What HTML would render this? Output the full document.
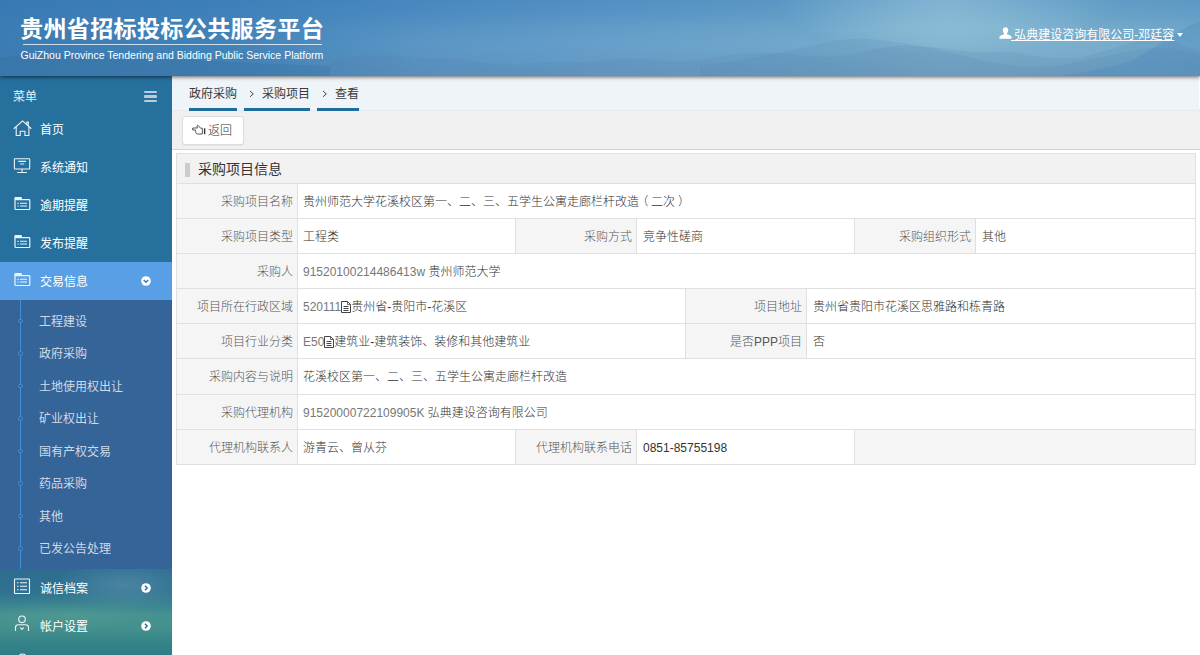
<!DOCTYPE html>
<html lang="zh-CN">
<head>
<meta charset="utf-8">
<title>贵州省招标投标公共服务平台</title>
<style>
*{box-sizing:border-box;margin:0;padding:0}
html,body{width:1200px;height:655px;overflow:hidden;background:#fff}
body{font-family:"Liberation Sans","Noto Sans CJK SC",sans-serif;font-size:12px;color:#333;position:relative;font-weight:300}
a{color:inherit;text-decoration:none}
/* header */
#hd{position:absolute;left:0;top:0;width:1200px;height:76px;z-index:5;overflow:visible;background:#4a8bbf;box-shadow:0 1px 4px rgba(0,0,0,.6)}
#hd .bg{position:absolute;left:0;top:0;width:1200px;height:76px;display:block}
#hd h1{position:absolute;left:20px;top:14px;font-size:23.100px;line-height:30px;font-weight:bold;color:#fff;letter-spacing:.3px;white-space:nowrap}
#hd .ln{position:absolute;left:23px;top:44px;width:299px;height:1px;background:rgba(255,255,255,.75)}
#hd .en{position:absolute;left:20.500px;top:47.700px;font-size:10.500px;line-height:14px;color:#fff;white-space:nowrap}
#hd .user{position:absolute;left:998px;top:26px;height:18px;line-height:18px;color:#fff;white-space:nowrap;font-size:12px;font-weight:400}
#hd .user svg{position:absolute;left:.6px;top:1.300px}
#hd .user .t{position:absolute;left:13px;top:0;text-decoration:underline;white-space:pre}
#hd .user .c{position:absolute;left:178.500px;top:7px;width:0;height:0;border:3.300px solid transparent;border-top:4px solid #fff;border-bottom:0}
/* sidebar */
#sb{position:absolute;left:0;top:76px;width:172px;height:579px;background:#26709e;color:#fff;overflow:hidden}
#sb .photo{position:absolute;left:0;top:493px;width:172px;height:86px;
 background:
  radial-gradient(ellipse 70px 26px at 125px 16px,rgba(120,165,190,.38),rgba(120,165,190,0) 100%),
  radial-gradient(ellipse 90px 14px at 70px 46px,rgba(95,165,150,.32),rgba(95,165,150,0) 100%),
  linear-gradient(180deg,#2d6d92 0,#2f7190 22px,#3a8490 36px,#469290 46px,#43908d 60px,#378589 72px,#2e7c88 86px)}
#sb .mt{position:absolute;left:13px;top:10.500px;line-height:20px;font-size:12px;font-weight:400;color:#e8eef4}
#sb .hb{position:absolute;left:144px;top:15px;width:13px;height:11px}
#sb .hb i{display:block;height:2.4px;margin-bottom:2px;background:#bccbd8;border-radius:1px}
#sb .it{position:absolute;left:0;width:172px;height:38px;line-height:38px}
#sb .it span{position:absolute;left:40px;top:1px;font-size:12px;font-weight:400}
#sb .it svg{position:absolute;left:13px;top:10px}
#sb .it.on{background:#589fe6}
#sb .sub{position:absolute;left:0;top:224px;width:172px;height:269px;background:#346498}
#sb .sub .vl{position:absolute;left:20px;top:0;width:1px;height:269px;background:#3f8fd8}
#sb .sub a{position:absolute;left:39px;height:20px;line-height:20px;font-size:12px;color:#cfdae7;font-weight:400}
#sb .sub a:before{content:"";position:absolute;left:-21.200px;top:7.200px;width:2.800px;height:2.800px;border-radius:50%;border:1px solid #3f8fd8;background:#346498}
#sb .it svg.arr{position:absolute;left:141px;top:14px}
/* main */
#bc{position:absolute;left:172px;top:76px;width:1027px;height:35px;background:#eff4f9;border-bottom:1px solid #e6eaee;border-radius:0 0 3px 0;z-index:2}
#bc .b{position:absolute;top:0;height:35px;line-height:36px;border-bottom:3px solid #1f6d9f;color:#3a3a3a;font-size:12px;font-weight:400;text-align:center;white-space:nowrap}
#bc .s{position:absolute;top:0;line-height:34px;color:#333;font-size:12px}
#tb{position:absolute;left:172px;top:108px;width:1028px;height:42px;background:#f0f0f0;border-bottom:1px solid #d4d4d4}
#tb .btn{position:absolute;left:10px;top:8px;width:62px;height:29px;background:#fff;border:1px solid #ddd;border-radius:3px;box-shadow:0 1px 1px rgba(0,0,0,.06);line-height:27px;font-size:12px;color:#333}
#tb .btn span{position:absolute;left:25px;top:1px}
#tb .btn svg{position:absolute;left:9px;top:7px}
#pn{position:absolute;left:176px;top:153px;width:1020px;height:312px;border:1px solid #e0e0e0;background:#fff}
#pn .ph{position:absolute;left:0;top:0;width:1018px;height:30px;background:#f2f2f2}
#pn .ph i{position:absolute;left:8px;top:9px;width:4.500px;height:13.500px;background:#ccc}
#pn .ph b{position:absolute;left:21px;top:0;line-height:30px;font-size:14px;font-weight:normal;color:#333}
.r{position:absolute;left:0;width:1018px;border-top:1px solid #e0e0e0}
.c{position:absolute;top:0;height:100%;white-space:nowrap;font-size:12px}
.l{background:#f5f5f5;text-align:right;padding-right:4px;color:#555;border-right:1px solid #e0e0e0;border-left:1px solid #e0e0e0}
.v{padding-left:5px;color:#333}
.g{color:#777}
.r .c{line-height:36px}
.l.first{border-left:0}
.ic{display:inline-block;width:10px;height:12px;vertical-align:-2px;margin:0}
</style>
</head>
<body>
<div id="hd">
 <svg class="bg" width="1200" height="76" viewBox="0 0 1200 76" preserveAspectRatio="none">
  <defs>
   <linearGradient id="hg" x1="0" y1="0" x2="1" y2="0">
    <stop offset="0" stop-color="#3b7cb3"/><stop offset=".17" stop-color="#4082b8"/><stop offset=".33" stop-color="#4e8dc1"/>
    <stop offset=".5" stop-color="#5c98c7"/><stop offset=".67" stop-color="#68a2c8"/><stop offset=".79" stop-color="#79afcd"/>
    <stop offset=".92" stop-color="#70a8ca"/><stop offset="1" stop-color="#6aa3c8"/>
   </linearGradient>
   <linearGradient id="hv" x1="0" y1="0" x2="0" y2="1">
    <stop offset="0" stop-color="#2d6fb5" stop-opacity=".22"/><stop offset=".38" stop-color="#2d6fb5" stop-opacity="0"/>
    <stop offset=".6" stop-color="#4a7299" stop-opacity="0"/><stop offset="1" stop-color="#4a7299" stop-opacity=".2"/>
   </linearGradient>
   <radialGradient id="hr" cx="945" cy="0" r="170" gradientUnits="userSpaceOnUse" gradientTransform="translate(0 0) scale(1 .32)">
    <stop offset="0" stop-color="#a5cfe0" stop-opacity=".7"/><stop offset="1" stop-color="#a5cfe0" stop-opacity="0"/>
   </radialGradient>
   <linearGradient id="hm" x1="0" y1="0" x2="0" y2="1">
    <stop offset=".15" stop-color="#cfe0ea" stop-opacity="0"/><stop offset=".6" stop-color="#cfe0ea" stop-opacity=".1"/><stop offset="1" stop-color="#cfe0ea" stop-opacity=".12"/>
   </linearGradient>
   <linearGradient id="hk" x1="0" y1="0" x2="1" y2="0">
    <stop offset=".2" stop-color="#000"/><stop offset=".36" stop-color="#fff"/><stop offset="1" stop-color="#fff"/>
   </linearGradient>
   <mask id="hmk"><rect width="1200" height="76" fill="url(#hk)"/></mask>
  </defs>
  <rect width="1200" height="76" fill="url(#hg)"/>
  <rect width="1200" height="76" fill="url(#hm)" mask="url(#hmk)"/>
  <rect width="1200" height="76" fill="url(#hr)"/>
  <rect width="1200" height="76" fill="url(#hv)"/>
  <path d="M330 76V62Q360 52 395 56T455 58Q490 66 520 64T590 62Q630 56 660 60T720 56Q760 50 800 55T870 50Q905 42 940 48T1010 52Q1050 60 1080 58Q1110 50 1140 40Q1160 34 1180 44L1200 52V76Z" fill="#4a7da8" fill-opacity=".13"/>
  <path d="M700 76V66Q760 58 820 44Q850 36 880 40Q930 46 980 60Q1020 70 1060 66Q1100 56 1150 48Q1180 46 1200 56V76Z" fill="#4f82ad" fill-opacity=".14"/>
  <path d="M1060 76Q1100 70 1130 62Q1160 44 1188 26L1200 22V76Z" fill="#4a88bc" fill-opacity=".33"/>
  <path d="M0 76V58Q40 52 90 56T200 60Q260 64 330 66V76Z" fill="#2f6a9c" fill-opacity=".25"/>
 </svg>
 <h1>贵州省招标投标公共服务平台</h1>
 <div class="ln"></div>
 <div class="en">GuiZhou Province Tendering and Bidding Public Service Platform</div>
 <div class="user">
  <svg width="13" height="12" viewBox="0 0 13 12"><path d="M6.5 0.3c1.7 0 2.7 1.3 2.7 3 0 1.2-.5 2.4-1.300 3.100v.8c1.800.5 4.300 1.300 4.600 2.600.1.600.1 1.200.1 1.900H.4c0-.7 0-1.300.1-1.900.3-1.300 2.800-2.100 4.600-2.600v-.8C4.300 5.700 3.800 4.500 3.800 3.300c0-1.700 1-3 2.700-3z" fill="#fff"/></svg>
  <span class="t"> 弘典建设咨询有限公司-邓廷容</span>
  <i class="c"></i>
 </div>
</div>

<div id="sb">
 <div class="photo"></div>
 <div class="mt">菜单</div>
 <div class="hb"><i></i><i></i><i></i></div>
 <div class="it" style="top:34px"><svg width="19" height="17" viewBox="0 0 19 17" fill="none" stroke="#eef3f7" stroke-width="1.1" stroke-linejoin="round" stroke-linecap="round"><path d="M1 8.5L9.6 0.9L18 8.5"/><path d="M3.2 7.2V15.500H7.200V11.300H11.900V15.500H15.900V7.200"/><path d="M13.800 4.300V2.100H15.300V5.900"/></svg><span>首页</span></div>
 <div class="it" style="top:72px"><svg width="19" height="17" viewBox="0 0 19 17" fill="none" stroke="#eef3f7" stroke-width="1.1"><rect x="1.400" y="0.700" width="15.300" height="10.300" rx="0.500"/><path d="M9 11V14.500M4.200 14.500H13.900M5.200 3.400H13M7.200 6H11.200"/></svg><span>系统通知</span></div>
 <div class="it" style="top:110px"><svg width="19" height="17" viewBox="0 0 19 17" fill="none" stroke="#eef3f7" stroke-width="1.200"><path d="M2 3.700H16Q16.800 3.700 16.800 4.500V12.700Q16.800 13.500 16 13.500H2.800Q2 13.500 2 12.700Z"/><path d="M1.400 4.300V1.900Q1.400 1.100 2.200 1.100H8Q8.800 1.100 8.900 1.900V3.500H1.400Z" fill="#eef3f7" stroke="none"/><path d="M7 7.300H14M7 10H14" stroke-width="1.100"/><path d="M4.500 7.300H5.800M4.500 10H5.800" stroke-width="1.200"/></svg><span>逾期提醒</span></div>
 <div class="it" style="top:148px"><svg width="19" height="17" viewBox="0 0 19 17" fill="none" stroke="#eef3f7" stroke-width="1.200"><path d="M2 3.700H16Q16.800 3.700 16.800 4.500V12.700Q16.800 13.500 16 13.500H2.800Q2 13.500 2 12.700Z"/><path d="M1.400 4.300V1.900Q1.400 1.100 2.200 1.100H8Q8.800 1.100 8.900 1.900V3.500H1.400Z" fill="#eef3f7" stroke="none"/><path d="M7 7.300H14M7 10H14" stroke-width="1.100"/><path d="M4.500 7.300H5.800M4.500 10H5.800" stroke-width="1.200"/></svg><span>发布提醒</span></div>
 <div class="it on" style="top:186px"><svg width="19" height="17" viewBox="0 0 19 17" fill="none" stroke="#eef3f7" stroke-width="1.200"><path d="M2 3.700H16Q16.800 3.700 16.800 4.500V12.700Q16.800 13.500 16 13.500H2.800Q2 13.500 2 12.700Z"/><path d="M1.400 4.300V1.900Q1.400 1.100 2.200 1.100H8Q8.800 1.100 8.900 1.900V3.500H1.400Z" fill="#eef3f7" stroke="none"/><path d="M7 7.300H14M7 10H14" stroke-width="1.100"/><path d="M4.500 7.300H5.800M4.500 10H5.800" stroke-width="1.200"/></svg><span>交易信息</span><svg class="arr" width="10" height="10" viewBox="0 0 11 11"><circle cx="5.500" cy="5.500" r="5.300" fill="#fff"/><path d="M3 4.300L5.500 6.800L8 4.300" fill="none" stroke="#3c78b8" stroke-width="1.600"/></svg></div>
 <div class="sub"><i class="vl"></i>
  <a style="top:11.5px">工程建设</a>
  <a style="top:44.0px">政府采购</a>
  <a style="top:76.5px">土地使用权出让</a>
  <a style="top:109.0px">矿业权出让</a>
  <a style="top:141.5px">国有产权交易</a>
  <a style="top:174.0px">药品采购</a>
  <a style="top:206.5px">其他</a>
  <a style="top:239.0px">已发公告处理</a>
 </div>
 <div class="it" style="top:492.600px"><svg style="top:9px" width="19" height="17" viewBox="0 0 19 17" fill="none" stroke="#eef3f7" stroke-width="1.100"><rect x="1.500" y="1" width="15" height="14.500" rx="0.500"/><path d="M7 4.700H14M7 8.200H14M7 11.700H14M4 4.700H5.500M4 8.200H5.500M4 11.700H5.500"/></svg><span>诚信档案</span><svg class="arr" width="10" height="10" viewBox="0 0 11 11"><circle cx="5.500" cy="5.500" r="5.300" fill="#fff"/><path d="M4.300 3L6.800 5.500L4.300 8" fill="none" stroke="#2f6f96" stroke-width="1.600"/></svg></div>
 <div class="it" style="top:530.600px"><svg style="top:8.800px" width="19" height="17" viewBox="0 0 19 17" fill="none" stroke="#eef3f7" stroke-width="1.100" stroke-linecap="round" stroke-linejoin="round"><circle cx="9" cy="4.300" r="3.300"/><path d="M2.500 15.500V12.500Q2.500 9.800 5.500 9.800H12.500Q15.500 9.800 15.500 12.500V15.500"/><path d="M7.500 12.800L9 14.300L10.500 12.800"/></svg><span>帐户设置</span><svg class="arr" width="10" height="10" viewBox="0 0 11 11"><circle cx="5.500" cy="5.500" r="5.300" fill="#fff"/><path d="M4.300 3L6.800 5.500L4.300 8" fill="none" stroke="#2f6f96" stroke-width="1.600"/></svg></div>
 <div class="it" style="top:568px"><svg width="19" height="17" viewBox="0 0 19 17" fill="none" stroke="#eef3f7" stroke-width="1.100" style="top:8.500px"><circle cx="9.500" cy="5.500" r="4.500"/></svg><span>&nbsp;</span></div>
</div>

<div id="bc">
 <a class="b" style="left:17px;width:48px">政府采购</a>
 <a class="b" style="left:72px;width:66px;text-align:right"><svg width="6" height="8" viewBox="0 0 6 8" style="position:absolute;top:14px;left:4.500px"><path d="M1 1L4.300 3.900L1 6.800" fill="none" stroke="#444" stroke-width="1"/></svg>采购项目</a>
 <a class="b" style="left:145px;width:42px;text-align:right"><svg width="6" height="8" viewBox="0 0 6 8" style="position:absolute;top:14px;left:4.500px"><path d="M1 1L4.300 3.900L1 6.800" fill="none" stroke="#444" stroke-width="1"/></svg>查看</a>
</div>
<div id="tb"><a class="btn"><svg width="14" height="12" viewBox="0 0 14 12" fill="none" stroke="#444" stroke-width="0.900" stroke-linejoin="round"><path d="M0.800 4H5.500L4.800 2Q5.300 0.900 6.300 1.600L8.500 4.200H10.300V10H5.500Q4.200 10 4.200 8.900Q3.300 8.400 3.700 7.500Q2.900 6.900 3.500 6H0.800Q0.200 5 0.800 4Z"/><path d="M12.600 4.300V10.200" stroke-width="1.400" stroke="#333"/></svg><span>返回</span></a></div>
<div id="pn">
 <div class="ph"><i></i><b>采购项目信息</b></div>
 <div class="r" style="top:29px;height:35px"><div class="c l first" style="left:0px;width:121px">采购项目名称</div><div class="c v" style="left:121px;width:897px">贵州师范大学花溪校区第一、二、三、五学生公寓走廊栏杆改造<span style="position:relative;left:-2.500px">（</span>二次<span style="position:relative;left:3px">）</span></div></div>
 <div class="r" style="top:64px;height:35px"><div class="c l first" style="left:0px;width:121px">采购项目类型</div><div class="c v" style="left:121px;width:218px">工程类</div><div class="c l" style="left:338px;width:122px">采购方式</div><div class="c v" style="left:461px;width:218px">竞争性磋商</div><div class="c l" style="left:677px;width:122px">采购组织形式</div><div class="c v" style="left:800px;width:218px">其他</div></div>
 <div class="r" style="top:99px;height:35px"><div class="c l first" style="left:0px;width:121px">采购人</div><div class="c v" style="left:121px;width:897px"><span class="g">91520100214486413w</span> 贵州师范大学</div></div>
 <div class="r" style="top:134px;height:35px"><div class="c l first" style="left:0px;width:121px">项目所在行政区域</div><div class="c v" style="left:121px;width:387px"><span class="g">520111</span><svg class="ic" width="10" height="12" viewBox="0 0 10 12" fill="none" stroke="#444" stroke-width="1"><path d="M0.500 0.500H6.500L9.500 3.500V11.500H0.500Z"/><path d="M6.500 0.500V3.500H9.500" stroke-width="0.800"/><path d="M2.500 5.500H7.500M2.500 7.500H7.500M2.500 9.500H7.500"/></svg>贵州省-贵阳市-花溪区</div><div class="c l" style="left:508px;width:122px">项目地址</div><div class="c v" style="left:631px;width:387px">贵州省贵阳市花溪区思雅路和栋青路</div></div>
 <div class="r" style="top:169px;height:35px"><div class="c l first" style="left:0px;width:121px">项目行业分类</div><div class="c v" style="left:121px;width:387px"><span class="g">E50</span><svg class="ic" width="10" height="12" viewBox="0 0 10 12" fill="none" stroke="#444" stroke-width="1"><path d="M0.500 0.500H6.500L9.500 3.500V11.500H0.500Z"/><path d="M6.500 0.500V3.500H9.500" stroke-width="0.800"/><path d="M2.500 5.500H7.500M2.500 7.500H7.500M2.500 9.500H7.500"/></svg>建筑业-建筑装饰、装修和其他建筑业</div><div class="c l" style="left:508px;width:122px">是否PPP项目</div><div class="c v" style="left:631px;width:387px">否</div></div>
 <div class="r" style="top:204px;height:36px"><div class="c l first" style="left:0px;width:121px">采购内容与说明</div><div class="c v" style="left:121px;width:897px">花溪校区第一、二、三、五学生公寓走廊栏杆改造</div></div>
 <div class="r" style="top:240px;height:35px"><div class="c l first" style="left:0px;width:121px">采购代理机构</div><div class="c v" style="left:121px;width:897px"><span class="g">91520000722109905K</span> 弘典建设咨询有限公司</div></div>
 <div class="r" style="top:275px;height:35px"><div class="c l first" style="left:0px;width:121px">代理机构联系人</div><div class="c v" style="left:121px;width:218px">游青云、曾从芬</div><div class="c l" style="left:338px;width:122px">代理机构联系电话</div><div class="c v" style="left:461px;width:218px">0851-85755198</div><div class="c l" style="left:677px;width:341px;border-right:0"></div></div>
</div>
</body>
</html>
